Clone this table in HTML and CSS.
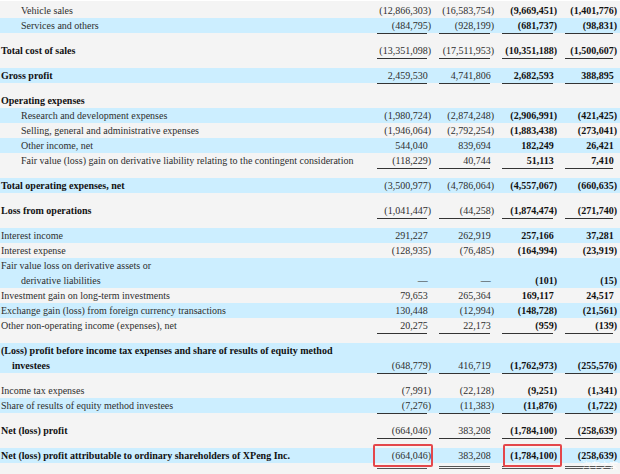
FILE: index.html
```html
<!DOCTYPE html>
<html lang="en">
<head>
    <meta charset="UTF-8">
    <title>Income statement</title>
    <link rel="stylesheet" href="styles.css">
</head>
<body>

    <div class="sheet">
        <div class="row"><div class="lbl in">Vehicle sales</div><div class="n">(12,866,303)</div><div class="n">(16,583,754)</div><div class="n b">(9,669,451)</div><div class="n b">(1,401,776)</div></div>
        <div class="row blue"><div class="lbl in">Services and others</div><div class="n">(484,795)</div><div class="n">(928,199)</div><div class="n b">(681,737)</div><div class="n b">(98,831)</div></div>
        <div class="gap u"><i></i><i></i><i></i><i></i></div>

        <div class="row"><div class="lbl b">Total cost of sales</div><div class="n">(13,351,098)</div><div class="n">(17,511,953)</div><div class="n b">(10,351,188)</div><div class="n b">(1,500,607)</div></div>
        <div class="gap u"><i></i><i></i><i></i><i></i></div>

        <div class="row blue"><div class="lbl b">Gross profit</div><div class="n p">2,459,530</div><div class="n p">4,741,806</div><div class="n b p">2,682,593</div><div class="n b p">388,895</div></div>
        <div class="gap u"><i></i><i></i><i></i><i></i></div>

        <div class="row"><div class="lbl b">Operating expenses</div></div>
        <div class="row blue"><div class="lbl in">Research and development expenses</div><div class="n">(1,980,724)</div><div class="n">(2,874,248)</div><div class="n b">(2,906,991)</div><div class="n b">(421,425)</div></div>
        <div class="row"><div class="lbl in">Selling, general and administrative expenses</div><div class="n">(1,946,064)</div><div class="n">(2,792,254)</div><div class="n b">(1,883,438)</div><div class="n b">(273,041)</div></div>
        <div class="row blue"><div class="lbl in">Other income, net</div><div class="n p">544,040</div><div class="n p">839,694</div><div class="n b p">182,249</div><div class="n b p">26,421</div></div>
        <div class="row"><div class="lbl in">Fair value (loss) gain on derivative liability relating to the contingent consideration</div><div class="n">(118,229)</div><div class="n p">40,744</div><div class="n b p">51,113</div><div class="n b p">7,410</div></div>
        <div class="gap u"><i></i><i></i><i></i><i></i></div>

        <div class="row blue"><div class="lbl b">Total operating expenses, net</div><div class="n">(3,500,977)</div><div class="n">(4,786,064)</div><div class="n b">(4,557,067)</div><div class="n b">(660,635)</div></div>
        <div class="gap"></div>

        <div class="row"><div class="lbl b">Loss from operations</div><div class="n">(1,041,447)</div><div class="n">(44,258)</div><div class="n b">(1,874,474)</div><div class="n b">(271,740)</div></div>
        <div class="gap u"><i></i><i></i><i></i><i></i></div>

        <div class="row blue"><div class="lbl">Interest income</div><div class="n p">291,227</div><div class="n p">262,919</div><div class="n b p">257,166</div><div class="n b p">37,281</div></div>
        <div class="row"><div class="lbl">Interest expense</div><div class="n">(128,935)</div><div class="n">(76,485)</div><div class="n b">(164,994)</div><div class="n b">(23,919)</div></div>
        <div class="row blue two"><div class="lbl">Fair value loss on derivative assets or<span class="wrap in">derivative liabilities</span></div><div class="n p">—</div><div class="n p">—</div><div class="n b">(101)</div><div class="n b">(15)</div></div>
        <div class="row"><div class="lbl">Investment gain on long-term investments</div><div class="n p">79,653</div><div class="n p">265,364</div><div class="n b p">169,117</div><div class="n b p">24,517</div></div>
        <div class="row blue"><div class="lbl">Exchange gain (loss) from foreign currency transactions</div><div class="n p">130,448</div><div class="n">(12,994)</div><div class="n b">(148,728)</div><div class="n b">(21,561)</div></div>
        <div class="row"><div class="lbl">Other non-operating income (expenses), net</div><div class="n p">20,275</div><div class="n p">22,173</div><div class="n b">(959)</div><div class="n b">(139)</div></div>
        <div class="gap u"><i></i><i></i><i></i><i></i></div>

        <div class="row blue two"><div class="lbl b">(Loss) profit before income tax expenses and share of results of equity method<span class="wrap half">investees</span></div><div class="n">(648,779)</div><div class="n p">416,719</div><div class="n b">(1,762,973)</div><div class="n b">(255,576)</div></div>
        <div class="gap u"><i></i><i></i><i></i><i></i></div>

        <div class="row"><div class="lbl">Income tax expenses</div><div class="n">(7,991)</div><div class="n">(22,128)</div><div class="n b">(9,251)</div><div class="n b">(1,341)</div></div>
        <div class="row blue"><div class="lbl">Share of results of equity method investees</div><div class="n">(7,276)</div><div class="n">(11,383)</div><div class="n b">(11,876)</div><div class="n b">(1,722)</div></div>
        <div class="gap u"><i></i><i></i><i></i><i></i></div>

        <div class="row"><div class="lbl b">Net (loss) profit</div><div class="n">(664,046)</div><div class="n p">383,208</div><div class="n b">(1,784,100)</div><div class="n b">(258,639)</div></div>
        <div class="gap u"><i></i><i></i><i></i><i></i></div>

        <div class="row blue"><div class="lbl b">Net (loss) profit attributable to ordinary shareholders of XPeng Inc.</div><div class="n">(664,046)</div><div class="n p">383,208</div><div class="n b">(1,784,100)</div><div class="n b">(258,639)</div></div>
        <div class="gap dbl"><i></i><i></i><i></i><i></i></div>

        <!-- marcações em vermelho -->
        <div class="mark mark-a"></div>
        <div class="mark mark-b"></div>
        <div class="stamp">汽车之家</div>
    </div>

</body>
</html>
```

FILE: styles.css
```css
:root {
    --page: #f4f4f4;
    --shade: #cceeff;
    --text: #2e2e2e;
    --strong: #111;
    --rule: #333;
    --mark: #e4474b;
}

body {
    margin: 0;
    background-color: var(--page);
    font-family: "Liberation Serif", "Times New Roman", serif;
    font-size: 10px;
    color: var(--text);
}

.sheet {
    position: relative;
    height: 474px;
    padding-top: 2px;
    box-sizing: border-box;
    border-top: 1px solid #fff;
    overflow: hidden;
}

/* linhas da tabela */
.row,
.gap {
    display: grid;
    grid-template-columns: 1fr 54px 55px 55px 52px;
    column-gap: 8px;
    padding: 0 3px 0 1px;
}

.row {
    line-height: 15px;
}

.row.blue {
    background-color: var(--shade);
}

.lbl {
    white-space: nowrap;
}

.lbl.in {
    padding-left: 20px;
}

.b {
    font-weight: bold;
    color: var(--strong);
}

.wrap {
    display: block;
    font-weight: inherit;
}

.wrap.in {
    padding-left: 20px;
}

.wrap.half {
    padding-left: 11px;
}

.row.two .n {
    align-self: end;
}

.n {
    text-align: right;
    white-space: nowrap;
}

.n:nth-child(2) {
    grid-column: 2;
}

/* valores positivos ficam alinhados com o parêntese */
.n.p::after {
    content: ")";
    visibility: hidden;
}

.gap {
    height: 10px;
}

.gap i {
    display: block;
    margin-right: 4px;
    border-top: 1px solid var(--rule);
}

.gap i:first-child {
    grid-column: 2;
}

.gap.dbl i {
    margin-top: 3px;
    border-top: 3px double #555;
}

.mark {
    position: absolute;
    box-sizing: border-box;
    border: 2px solid var(--mark);
    border-radius: 2px;
}

.mark-a {
    left: 373px;
    top: 443px;
    width: 60px;
    height: 23px;
}

.mark-b {
    left: 503px;
    top: 443px;
    width: 59px;
    height: 23px;
}

.stamp {
    position: absolute;
    left: 582px;
    top: 459px;
    font-family: "Noto Sans CJK SC", sans-serif;
    font-size: 9px;
    line-height: 12px;
    color: rgba(255, 255, 255, 0.85);
}
```
